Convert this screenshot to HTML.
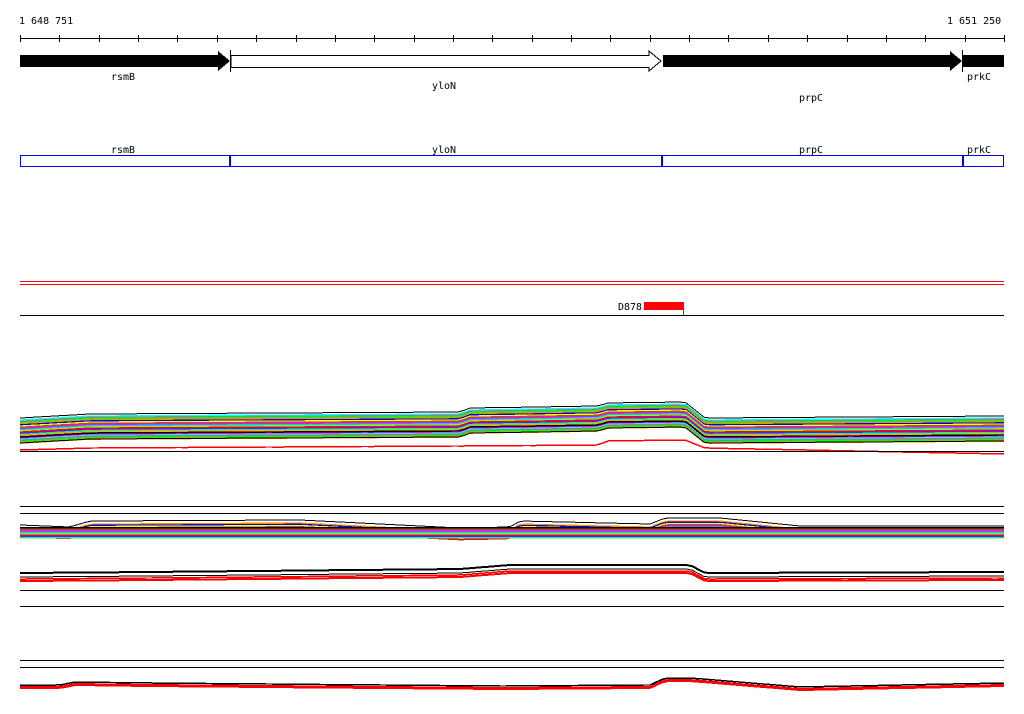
<!DOCTYPE html>
<html><head><meta charset="utf-8"><style>
body{margin:0;background:#fff;width:1024px;height:714px;overflow:hidden}
svg{display:block}
text{font-family:"DejaVu Sans Mono","Liberation Mono",monospace;font-size:10px;fill:#000}
</style></head><body>
<svg id="s" width="1024" height="714" xmlns="http://www.w3.org/2000/svg" shape-rendering="crispEdges">
<text x="19" y="24">1 648 751</text>
<text x="947" y="24">1 651 250</text>
<line x1="20" y1="38.5" x2="1004" y2="38.5" stroke="#000"/>
<g id="ticks" stroke="#000"></g>
<polygon points="20,55 218,55 218,51 230,61 218,71 218,67 20,67" fill="#000"/>
<line x1="230.5" y1="50" x2="230.5" y2="72" stroke="#000"/>
<polygon points="231,55.5 649,55.5 649,51 661,61 649,71 649,67.5 231,67.5" fill="#fff" stroke="#000"/>
<polygon points="663,55 950,55 950,51 962,61 950,71 950,67 663,67" fill="#000"/>
<line x1="962.5" y1="50" x2="962.5" y2="72" stroke="#000"/>
<rect x="963" y="55" width="41" height="12" fill="#000"/>
<text x="111" y="80">rsmB</text>
<text x="432" y="89">yloN</text>
<text x="799" y="101">prpC</text>
<text x="967" y="80">prkC</text>
<text x="111" y="153">rsmB</text>
<text x="432" y="153">yloN</text>
<text x="799" y="153">prpC</text>
<text x="967" y="153">prkC</text>
<rect x="20.5" y="155.5" width="983" height="11" fill="none" stroke="#00f"/>
<rect x="229" y="155" width="2" height="12" fill="#00f"/>
<rect x="661" y="155" width="2" height="12" fill="#00f"/>
<rect x="962" y="155" width="2" height="12" fill="#00f"/>
<line x1="20" y1="281.5" x2="1004" y2="281.5" stroke="#f00"/>
<line x1="20" y1="284.5" x2="1004" y2="284.5" stroke="#f00"/>
<text x="618" y="310">D878</text>
<rect x="644" y="302" width="40" height="8" fill="#f00"/>
<line x1="683.5" y1="302" x2="683.5" y2="315" stroke="#f00"/>
<line x1="20" y1="315.5" x2="1004" y2="315.5" stroke="#000"/>
<g id="bands"></g>
<g stroke="#000">
<line x1="20" y1="451.5" x2="1004" y2="451.5"/>
<line x1="20" y1="506.5" x2="1004" y2="506.5"/>
<line x1="20" y1="513.5" x2="1004" y2="513.5"/>
<line x1="20" y1="590.5" x2="1004" y2="590.5"/>
<line x1="20" y1="606.5" x2="1004" y2="606.5"/>
<line x1="20" y1="660.5" x2="1004" y2="660.5"/>
<line x1="20" y1="667.5" x2="1004" y2="667.5"/>
</g>
</svg>
<script>
var NS="http://www.w3.org/2000/svg";
var t=document.getElementById("ticks");
for(var x=20;x<=1005;x+=39.36){var l=document.createElementNS(NS,"line");var xx=Math.round(x)+.5;l.setAttribute("x1",xx);l.setAttribute("x2",xx);l.setAttribute("y1",35);l.setAttribute("y2",42);t.appendChild(l);}
var g=document.getElementById("bands");
function interp(pts,x){for(var i=1;i<pts.length;i++){if(x<=pts[i][0]){var a=pts[i-1],b=pts[i];return a[1]+(b[1]-a[1])*(x-a[0])/(b[0]-a[0]);}}return pts[pts.length-1][1];}
function line(pts,off,col,w){var d="";for(var x=20;x<=1004;x+=6){d+=(d?"L":"M")+x+","+(interp(pts,x)+off).toFixed(1);}var p=document.createElementNS(NS,"path");p.setAttribute("d",d);p.setAttribute("stroke",col);p.setAttribute("fill","none");p.setAttribute("stroke-width",w||1.5);g.appendChild(p);}
var cols=["#f0f","#0ff","#888","#0f0","#f80","#00f","#ff0","#a52","#f0f","#0cf","#8f0","#f00","#80f","#0f8","#fa0","#888"];
var p1=[[20,418],[90,414],[460,412],[470,408],[600,406],[605,403],[685,402],[705,418],[1004,416]];
line(p1,0,"#000",1);
for(var i=1;i<=20;i++)line(p1,i*1.2+1,cols[i%cols.length],1.6);
line(p1,19,"#000",1.5);line(p1,22,"#888",1);line(p1,25,"#000",1);
var p1r=[[20,450],[90,448],[460,446],[600,445],[605,441],[685,440],[705,448],[1004,454]];
line(p1r,0,"#f00",1.5);
var p2=[[20,525],[70,527],[90,521],[300,520],[460,528],[510,527],[520,521],[650,524],[665,518],[720,518],[800,526],[1004,526]];
line(p2,0,"#000",1);
for(var i=1;i<=8;i++)line(p2,i*1.2+2,cols[(i+3)%cols.length],1.5);
var p2b=[[20,528],[1004,528]];line(p2b,0,"#000",2);
for(var i=1;i<=7;i++)line(p2b,i*1.4,cols[(i+6)%cols.length],1.5);
var p3=[[20,573],[150,572],[460,569],[510,565],[690,565],[705,573],[1004,572]];
line(p3,0,"#000",2);line(p3,4,"#000",1);line(p3,6,"#f00",1.5);line(p3,8,"#f00",2);
var p4=[[20,685],[60,685],[75,682],[150,683],[500,686],[650,685],[665,678],[690,678],[800,687],[1004,683]];
line(p4,0,"#000",1.5);line(p4,2,"#f00",2);line(p4,3.5,"#f00",1);
</script>
</body></html>
